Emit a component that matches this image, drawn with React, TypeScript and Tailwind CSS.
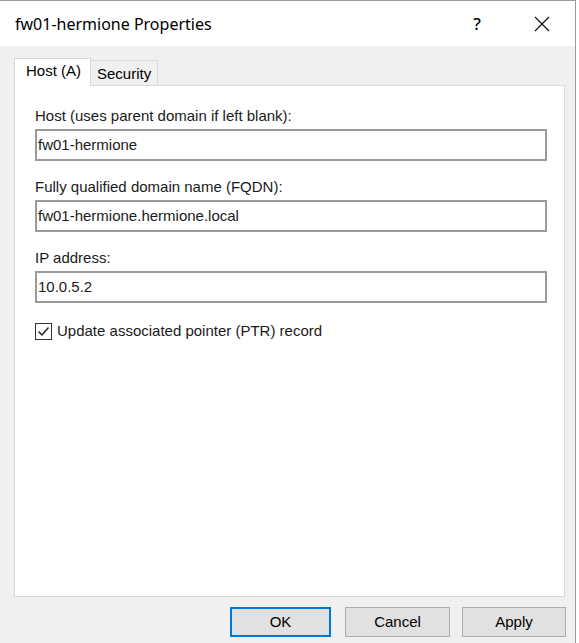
import React from "react";

const F = { fontFamily: '"Liberation Sans", Arial, sans-serif' };

function Field({ label, value, first }: { label: string; value: string; first?: boolean }) {
  return (
    <div className={first ? "" : "mt-[16px]"}>
      <div className="text-[15px] leading-[20px] text-[#1a1a1a]">{label}</div>
      <div className="mt-[3px] h-[32px] w-[512px] border-2 border-[#9a9a9a] bg-white flex items-center pl-[1px] text-[15px] text-[#1a1a1a]">
        {value}
      </div>
    </div>
  );
}

export default function App() {
  return (
    <div className="w-[579px] h-[643px] bg-white overflow-hidden" style={F}>
      <div className="w-[576px] h-[643px] border-t border-r border-[#9a9a9a] bg-[#f0f0f0] flex flex-col">
        {/* Title bar */}
        <div className="h-[45px] bg-white flex items-center shrink-0">
          <div
            className="pl-[15px] text-[16px] text-black flex-1"
            style={{ fontFamily: '"Segoe UI", "Noto Sans", "Open Sans", sans-serif' }}
          >
            fw01-hermione Properties
          </div>
          <div
            className="w-[20px] text-center text-[17px] font-medium text-black mr-[47px]"
            style={{ fontFamily: '"Segoe UI", "Noto Sans", sans-serif' }}
          >
            ?
          </div>
          <svg width="16" height="16" viewBox="0 0 16 16" className="mr-[25px]">
            <path d="M1 1 L15 15 M15 1 L1 15" stroke="#111" strokeWidth="1.2" />
          </svg>
        </div>

        {/* Body */}
        <div className="flex-1 flex flex-col pl-[14px] pt-[11px]">
          {/* Tabs */}
          <div className="flex items-end h-[28px]">
            <div className="h-[28px] w-[77px] bg-white border border-b-0 border-[#d9d9d9] flex items-center pl-[11px] text-[15px] text-black relative z-10 mb-[-1px] pb-[2px]">
              Host (A)
            </div>
            <div className="h-[25px] w-[67px] bg-[#f0f0f0] border border-l-0 border-b-0 border-[#d9d9d9] flex items-center pl-[6px] text-[15px] text-black pt-[2px]">
              Security
            </div>
          </div>
          {/* Panel */}
          <div className="w-[551px] h-[512px] bg-white border border-[#d9d9d9] pl-[20px] pt-[20px]">
            <Field first label="Host (uses parent domain if left blank):" value="fw01-hermione" />
            <Field label="Fully qualified domain name (FQDN):" value="fw01-hermione.hermione.local" />
            <Field label="IP address:" value="10.0.5.2" />
            <div className="mt-[19px] flex items-center h-[18px]">
              <div className="w-[17px] h-[17px] border-[1.5px] border-[#333] bg-white flex items-center justify-center">
                <svg width="13" height="11" viewBox="0 0 13 11">
                  <path d="M1.5 5.5 L5 9 L11.5 1.5" fill="none" stroke="#222" strokeWidth="1.5" />
                </svg>
              </div>
              <span className="ml-[5px] text-[15px] text-[#1a1a1a]">Update associated pointer (PTR) record</span>
            </div>
          </div>
          {/* Buttons */}
          <div className="flex mt-[10px] pl-[216px]">
            <div className="w-[101px] h-[30px] bg-[#e1e1e1] border-2 border-[#0078d7] flex items-center justify-center text-[15px] text-black">
              OK
            </div>
            <div className="ml-[14px] w-[105px] h-[30px] bg-[#e1e1e1] border border-[#adadad] flex items-center justify-center text-[15px] text-black">
              Cancel
            </div>
            <div className="ml-[12px] w-[104px] h-[30px] bg-[#e1e1e1] border border-[#adadad] flex items-center justify-center text-[15px] text-black">
              Apply
            </div>
          </div>
        </div>
      </div>
    </div>
  );
}
